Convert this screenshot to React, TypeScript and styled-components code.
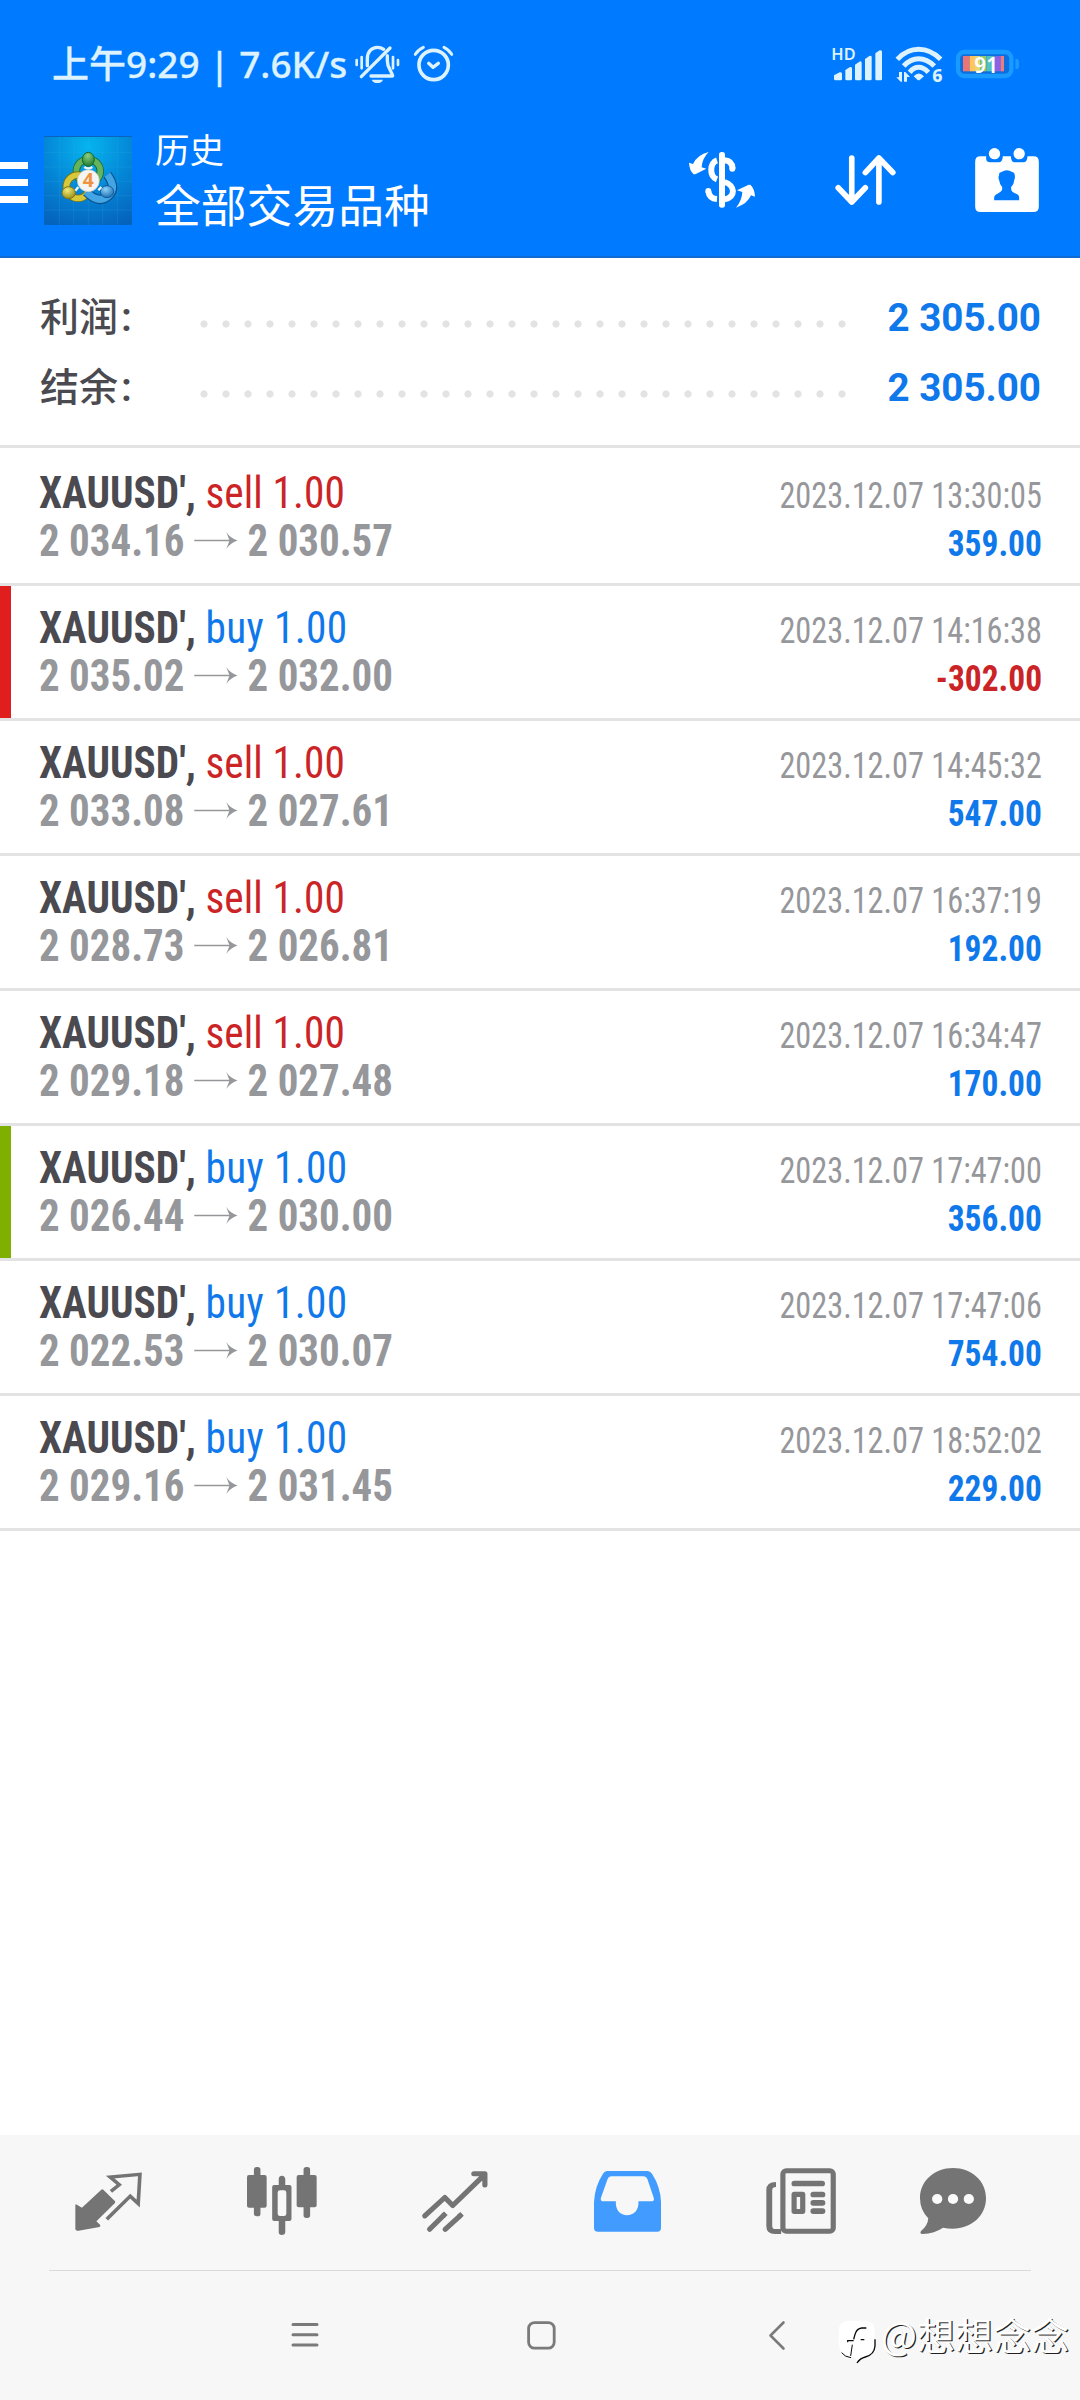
import React from "react";
import styled, { createGlobalStyle } from "styled-components";

const cjk = `"Noto Sans CJK SC", sans-serif`;

const GlobalStyle = createGlobalStyle`
  * { box-sizing: border-box; }
  body { margin: 0; background: #fff; }
`;

const Screen = styled.div`
  position: relative;
  display: flex;
  flex-direction: column;
  width: 1080px;
  height: 2400px;
  overflow: hidden;
  background: #fff;
  font-family: Roboto, ${cjk};
`;

const Icon = styled.svg`
  display: block;
  flex: none;
  overflow: visible;
`;

/* ---------- header ---------- */

const Header = styled.header`
  height: 258px;
  background: #007aff;
  border-bottom: 2px solid #0f6bd2;
  color: #fff;
`;

const StatusBar = styled.div`
  display: flex;
  align-items: flex-start;
  height: 130px;
  padding: 45px 61px 0 52px;
  color: #dcf2ff;
`;

const StatusText = styled.div`
  width: 303px;
  height: 37px;
  line-height: 37px;
  white-space: pre;
  font-family: "Noto Sans", ${cjk};
  font-size: 37px;
  font-weight: 500;
  -webkit-text-stroke: 0.3px currentColor;
`;

const StatusGroup = styled.div<{ $gap: number }>`
  display: flex;
  align-items: center;
  height: 37px;
  gap: ${(p) => p.$gap}px;
`;

const Spacer = styled.div`
  flex: 1;
`;

const TitleBar = styled.div`
  display: flex;
  align-items: flex-start;
  height: 126px;
  padding-right: 41px;
`;

const MenuButton = styled.div`
  display: flex;
  flex-direction: column;
  gap: 9.5px;
  width: 28px;
  margin: 32px 16px 0 0;
`;

const MenuBar = styled.span`
  height: 7.3px;
  background: #fff;
`;

const LogoBox = styled.div`
  padding-top: 6px;
`;

const Titles = styled.div`
  flex: 1;
  padding: 0 0 0 23px;
  font-family: ${cjk};
`;

const Subtitle = styled.div`
  height: 39px;
  line-height: 37px;
  font-size: 34.5px;
`;

const Title = styled.div`
  height: 60px;
  line-height: 60px;
  font-size: 45.8px;
  margin-top: 4px;
`;

const Actions = styled.div`
  display: flex;
  align-items: center;
  gap: 79.5px;
  margin-top: 18px;
  height: 64px;
`;

/* ---------- totals ---------- */

const Summary = styled.section`
  height: 190px;
  padding: 21px 39px 0 40px;
  border-bottom: 3px solid #e3e3e3;
`;

const SummaryRow = styled.div`
  display: flex;
  align-items: baseline;
  height: 70px;
  line-height: 70px;
`;

const SummaryLabel = styled.div`
  width: 160px;
  font-family: ${cjk};
  font-size: 39px;
  font-weight: 500;
  color: #4a4a50;
`;

const Colon = styled.span`
  margin-left: 3px;
  font-family: Roboto, sans-serif;
  font-weight: 600;
  font-size: 40px;
`;

const Leader = styled.div`
  align-self: center;
  width: 660px;
  height: 8px;
  margin-top: 20px;
  margin-left: -7.5px;
  background: radial-gradient(circle at center, #e3e3e3 3.2px, transparent 4px) 0 0 / 22px 8px;
`;

const SummaryValue = styled.div`
  flex: 1;
  text-align: right;
  font-size: 38.6px;
  font-weight: 700;
  color: #0f78ea;
`;

/* ---------- deals ---------- */

const Deals = styled.main`
  flex: 1;
  padding-top: 3px;
`;

const DealRow = styled.div<{ $mark?: string }>`
  display: flex;
  justify-content: space-between;
  height: 135px;
  padding: 19px 38px 0 28px;
  border-bottom: 3px solid #e3e3e3;
  background: linear-gradient(${(p) => p.$mark ?? "transparent"} 0 0) 0 0 / 11px 132px no-repeat;
`;

const DealSide = styled.div<{ $end?: boolean }>`
  display: flex;
  flex-direction: column;
  align-items: ${(p) => (p.$end ? "flex-end" : "flex-start")};
  padding: ${(p) => (p.$end ? "2px 0 0" : "0 0 0 11px")};
`;

const Line = styled.div<{ $small?: boolean; $squeeze: number }>`
  display: flex;
  align-items: center;
  height: 48px;
  line-height: 48px;
  white-space: pre;
  font-family: "Roboto Condensed", Roboto, sans-serif;
  font-stretch: 75%;
  font-size: ${(p) => (p.$small ? 36.5 : 43.5)}px;
  transform: scaleX(${(p) => p.$squeeze});
  transform-origin: ${(p) => (p.$small ? "right" : "left")} center;
`;

const Symbol = styled.span`
  font-weight: 700;
  color: #4a4a50;
`;

const Side = styled.span<{ $sell: boolean }>`
  letter-spacing: ${(p) => (p.$sell ? 0.1 : 0.4)}px;
  color: ${(p) => (p.$sell ? "#cb2427" : "#0f78ea")};
`;

const Price = styled.span`
  font-weight: 700;
  color: #96979b;
`;

const Time = styled.span`
  color: #96979b;
`;

const Profit = styled.span<{ $loss: boolean }>`
  font-weight: 700;
  color: ${(p) => (p.$loss ? "#cb2427" : "#0f78ea")};
`;

/* ---------- bottom ---------- */

const Footer = styled.footer`
  height: 265px;
  background: #f7f7f7;
`;

const Tabs = styled.nav`
  display: grid;
  grid-template-columns: repeat(5, 173px) 132px;
  align-items: center;
  justify-items: center;
  height: 135px;
  padding: 0 0 3px 22px;
`;

const Divider = styled.div`
  height: 1px;
  margin: 0 49px;
  background: #dadada;
`;

const SystemNav = styled.div`
  display: grid;
  grid-template-columns: 236px 236px 236px;
  justify-content: start;
  align-items: center;
  justify-items: center;
  height: 129px;
  padding: 0 0 1px 187px;
`;

const Watermark = styled.div`
  position: absolute;
  left: 838px;
  top: 2310px;
  display: flex;
  align-items: flex-start;
  gap: 5px;
  color: #fff;
  font-family: ${cjk};
  font-size: 38px;
  line-height: 47px;
  white-space: nowrap;
  text-shadow: 1.3px 1.3px 0.5px #222;
`;

const deals = [
  { side: "sell", from: "2 034.16", to: "2 030.57", time: "2023.12.07 13:30:05", profit: "359.00" },
  { side: "buy", from: "2 035.02", to: "2 032.00", time: "2023.12.07 14:16:38", profit: "-302.00", mark: "#e01e1e" },
  { side: "sell", from: "2 033.08", to: "2 027.61", time: "2023.12.07 14:45:32", profit: "547.00" },
  { side: "sell", from: "2 028.73", to: "2 026.81", time: "2023.12.07 16:37:19", profit: "192.00" },
  { side: "sell", from: "2 029.18", to: "2 027.48", time: "2023.12.07 16:34:47", profit: "170.00" },
  { side: "buy", from: "2 026.44", to: "2 030.00", time: "2023.12.07 17:47:00", profit: "356.00", mark: "#7fb000" },
  { side: "buy", from: "2 022.53", to: "2 030.07", time: "2023.12.07 17:47:06", profit: "754.00" },
  { side: "buy", from: "2 029.16", to: "2 031.45", time: "2023.12.07 18:52:02", profit: "229.00" },
];

const MutedBell = () => (
  <Icon width="45" height="38" viewBox="1064 76 135 114" fill="none" stroke="currentColor" strokeWidth="10" strokeLinecap="round" strokeLinejoin="round">
    <path d="M1101 138V117C1101 96 1114 83 1131 83Q1142 83 1150 89" />
    <path d="M1083 171L1169 85" />
    <path d="M1161 108V124C1161 144 1172 150 1177 169H1112" />
    <path d="M1114 180H1148Q1144 190 1131 190T1114 180Z" fill="currentColor" stroke="none" />
    <path d="M1069 121V136M1084 112V146M1178 112V146M1193 121V136" strokeWidth="8" />
  </Icon>
);

const AlarmClock = () => (
  <Icon width="39" height="37" viewBox="1242 76 117 111" fill="none" stroke="currentColor" strokeWidth="11" strokeLinecap="round" strokeLinejoin="round">
    <circle cx="1301" cy="136" r="44" />
    <path d="M1246 104Q1254 90 1270 83M1355 104Q1347 90 1332 83" strokeWidth="9" />
    <path d="M1286 131L1299 143L1315 131" strokeWidth="10" />
  </Icon>
);

const Signal = () => (
  <Icon width="50" height="34" viewBox="513 80 150 102" fill="currentColor">
    <text x="511" y="120" fontFamily="Noto Sans, sans-serif" fontSize="49" fontWeight="600" textLength="73">HD</text>
    <path d="M519 165L536 156Q543 154 543 160V176Q543 180 539 180H524Q519 180 519 176Z" />
    <path d="M553 149L567 140Q573 139 573 144V176Q573 180 569 180H557Q553 180 553 176Z" />
    <path d="M582 133L595 124Q602 121 602 128V176Q602 180 598 180H586Q582 180 582 176Z" />
    <path d="M612 116L625 107Q632 104 632 110V176Q632 180 628 180H616Q612 180 612 176Z" />
    <path d="M643 99L656 90Q663 88 663 94V176Q663 180 659 180H647Q643 180 643 176Z" />
  </Icon>
);

const Wifi = () => (
  <Icon width="46" height="36" viewBox="702 80 138 108" fill="none" stroke="currentColor" strokeWidth="15">
    <path d="M706 120Q734 90 770 90T836 120" />
    <path d="M725 140Q745 118 770 118T817 140" />
    <path d="M743 159Q755 144 770 144T799 159" />
    <path d="M755 171Q770 154 786 171L774 181Q770 184 766 181Z" fill="currentColor" stroke="none" />
    <path d="M703 174H711V158H720V187H716ZM726 187V158H730L744 173H735V187Z" fill="currentColor" stroke="none" />
    <text x="811" y="187" fontFamily="Noto Sans, sans-serif" fontSize="53" fontWeight="800" fill="currentColor" stroke="none">6</text>
  </Icon>
);

const stripes: [number, number, string][] = [
  [909, 20, "#ed7474"],
  [929, 16, "#ffc45e"],
  [945, 16, "#e4d873"],
  [961, 18, "#93c96f"],
  [979, 25, "#55c1bd"],
  [1004, 18, "#8b62e6"],
  [1022, 10, "#ed7c7c"],
];

const Battery = () => (
  <Icon width="63" height="28" viewBox="888 90 189 84">
    <rect x="894" y="96" width="160" height="72" rx="19" fill="#0c6fe0" stroke="#189aff" strokeWidth="13" />
    {stripes.map(([x, w, c]) => (
      <rect key={x} x={x} y="108" width={w} height="46" fill={c} />
    ))}
    <path d="M1066 117H1072Q1077 119 1077 126V140Q1077 146 1072 147H1066Z" fill="#189aff" />
    <text x="943" y="158" fontFamily="Noto Sans, sans-serif" fontSize="66" fontWeight="600" fill="#fff" textLength="71" lengthAdjust="spacingAndGlyphs">91</text>
  </Icon>
);

const AppLogo = () => (
  <Icon width="88" height="89" viewBox="42 48 264 267">
    <defs>
      <radialGradient id="sky" cx="0.5" cy="0.12" r="0.95">
        <stop offset="0" stopColor="#06b4ee" />
        <stop offset="0.5" stopColor="#0488d8" />
        <stop offset="1" stopColor="#0563bc" />
      </radialGradient>
      <radialGradient id="green" cx="0.45" cy="0.25" r="0.8">
        <stop offset="0" stopColor="#8ccf80" />
        <stop offset="1" stopColor="#16752a" />
      </radialGradient>
      <radialGradient id="gold" cx="0.4" cy="0.3" r="0.8">
        <stop offset="0" stopColor="#f2ea7c" />
        <stop offset="1" stopColor="#91860c" />
      </radialGradient>
      <radialGradient id="azure" cx="0.4" cy="0.3" r="0.8">
        <stop offset="0" stopColor="#8fd2f7" />
        <stop offset="1" stopColor="#0d64ac" />
      </radialGradient>
    </defs>
    <rect x="42" y="48" width="264" height="267" fill="url(#sky)" />
    <path d="M88 48V315M131 48V315M175 48V315M218 48V315M262 48V315M42 98H306M42 141H306M42 184H306M42 227H306M42 270H306" stroke="#3db4ee" strokeOpacity="0.25" strokeWidth="2" />
    <path d="M42 49.5H306" stroke="#0a64bd" strokeWidth="3" />
    <circle cx="175" cy="154" r="36" fill="none" stroke="#1a6b35" strokeWidth="22" />
    <circle cx="175" cy="154" r="36" fill="none" stroke="#63b45c" strokeWidth="17" />
    <circle cx="144" cy="200" r="35" fill="none" stroke="#7c7412" strokeWidth="22" />
    <circle cx="144" cy="200" r="35" fill="none" stroke="#d6c838" strokeWidth="17" />
    <path d="M232 164Q262 205 234 229Q205 252 169 216" fill="none" stroke="#0b4f8e" strokeWidth="28" />
    <path d="M232 164Q262 205 234 229Q205 252 169 216" fill="none" stroke="#43a5e4" strokeWidth="21" />
    <ellipse cx="175" cy="118" rx="18" ry="21" fill="url(#green)" stroke="#146b2b" strokeWidth="3" />
    <ellipse cx="116" cy="218" rx="20" ry="18" fill="url(#gold)" stroke="#7c7412" strokeWidth="3" />
    <ellipse cx="231" cy="215" rx="20" ry="18" fill="url(#azure)" stroke="#0d5c9e" strokeWidth="3" />
    <path d="M163 141Q175 150 187 141M136 212L145 201M214 201L205 211" stroke="#e9f6f5" strokeWidth="7" fill="none" />
    <circle cx="175" cy="182" r="33" fill="#f4f4f2" stroke="#bfc6c4" strokeWidth="2" />
    <text x="175" y="202" textAnchor="middle" fontFamily="Open Sans, sans-serif" fontSize="58" fontWeight="700" fill="#f0923e">4</text>
  </Icon>
);

const CurrencySwap = () => (
  <Icon width="66" height="56" viewBox="87 400 198 168" fill="#fff">
    <path d="M87 432L99 436Q112 408 146 400Q126 420 125 446L139 450L106 467H101Q88 455 87 432Z" />
    <path d="M285 534L273 530Q262 556 228 567Q246 545 247 520L231 515L266 498H271Q284 510 285 534Z" />
    <rect x="177" y="400" width="18" height="167" rx="8" />
    <path d="M171 425C149 432 147 473 171 482M194 425C210 426 217 435 218 450M194 490C226 500 228 536 194 542M171 541C154 540 147 532 145 518" fill="none" stroke="#fff" strokeWidth="18" />
    <circle cx="217" cy="450" r="9" />
    <circle cx="145" cy="517" r="9" />
  </Icon>
);

const SortArrows = () => (
  <Icon width="61" height="50" viewBox="524 407 183 151" fill="none" stroke="#fff" strokeWidth="17" strokeLinecap="round" strokeLinejoin="round">
    <path d="M574 416V549M533 506L574 549L615 506" />
    <path d="M656 549V416M615 460L656 416L698 460" />
  </Icon>
);

const CalendarUser = () => (
  <Icon width="64" height="64" viewBox="945 383 191 192">
    <path fillRule="evenodd" fill="#fff" d="M961 408H978V416Q979 426 990 426H1016Q1027 426 1028 408H1052Q1053 426 1063 426H1090Q1101 426 1102 408H1120Q1136 408 1136 424V559Q1136 575 1120 575H961Q945 575 945 559V424Q945 408 961 408ZM1002 540H1077V532Q1077 523 1068 520Q1053 515 1053 507V500Q1062 492 1062 480Q1066 472 1063 462Q1064 457 1056 455Q1040 445 1024 455Q1015 456 1017 464Q1013 472 1017 480Q1018 492 1026 500V507Q1025 514 1012 520Q1002 524 1002 532Z" />
    <circle cx="1003" cy="400" r="17" fill="#fff" />
    <circle cx="1077" cy="400" r="17" fill="#fff" />
  </Icon>
);

const Arrow = styled(Icon)`
  margin: 0 11px 4px 10px;
`;

const DealArrow = () => (
  <Arrow width="46" height="17" viewBox="0 0 46 17">
    <path d="M0 8.5H40" stroke="#96979b" strokeWidth="1.5" />
    <path d="M34 0Q38 6 46 8.5Q38 11 34 17L37.5 8.5Z" fill="#96979b" />
  </Arrow>
);

const grey = "#747474";

const QuotesIcon = () => (
  <Icon width="67" height="59" viewBox="218 159 194 176" preserveAspectRatio="none">
    <path d="M221 255L238 266L295 211Q297 209 300 212L334 246Q335 249 333 252L280 306L291 317Q292 322 289 323L228 334Q219 334 219 328V257Z" fill={grey} />
    <path d="M322 217L346 197L320 174L406 166L401 253L378 231L310 300" fill="none" stroke={grey} strokeWidth="10.5" />
  </Icon>
);

const ChartIcon = () => (
  <Icon width="70" height="68" viewBox="715 144 203 204" preserveAspectRatio="none" fill={grey}>
    <rect x="735" y="144" width="19" height="148" rx="8" />
    <rect x="715" y="168" width="57" height="98" rx="6" />
    <rect x="879" y="144" width="19" height="153" rx="8" />
    <rect x="859" y="168" width="58" height="97" rx="6" />
    <path fillRule="evenodd" d="M807 198V179Q808 170 816 170T826 179V198H838Q844 198 844 204V300Q844 306 838 306H826V340Q825 348 816 348T807 340V306H794Q788 306 788 300V204Q788 198 794 198ZM811 214Q804 214 804 221V284Q804 291 811 291H822Q829 291 829 284V221Q829 214 822 214Z" />
  </Icon>
);

const TradeIcon = () => (
  <Icon width="66" height="61" viewBox="1223 152 191 182" preserveAspectRatio="none" fill="none" stroke={grey} strokeWidth="15" strokeLinecap="round" strokeLinejoin="round">
    <path d="M1231 286L1289 231L1312 255L1405 162M1373 160H1405V194" />
    <path d="M1245 326L1286 284M1290 326L1333 286" />
    <path d="M1283 287L1292 278M1329 289L1339 280" strokeLinecap="butt" />
  </Icon>
);

const HistoryIcon = () => (
  <Icon width="67" height="61" viewBox="158 152 193 183" preserveAspectRatio="none">
    <path fillRule="evenodd" fill="#429bff" d="M196 152H312Q320 152 325 160Q350 200 351 245V323Q351 334 340 334H169Q158 334 158 323V245Q160 198 184 160Q188 152 196 152ZM207 168Q200 168 197 177L178 232Q175 243 186 243H221C219 270 235 285 253 285C272 285 288 270 286 243H323Q333 243 330 232L312 177Q309 168 300 168Z" />
  </Icon>
);

const NewsIcon = () => (
  <Icon width="70" height="66" viewBox="656 144 203 198" preserveAspectRatio="none">
    <rect x="705" y="152" width="146" height="182" rx="10" fill="none" stroke={grey} strokeWidth="15" />
    <path d="M685 186V201Q674 201 674 210V317Q674 327 683 327H700V342H682Q657 342 657 318V210Q657 186 685 186Z" fill={grey} />
    <g fill={grey}>
      <rect x="730" y="182" width="97" height="17" rx="8" />
      <rect x="785" y="215" width="43" height="17" rx="8" />
      <rect x="785" y="240" width="43" height="17" rx="8" />
      <rect x="785" y="265" width="43" height="17" rx="8" />
      <path fillRule="evenodd" d="M738 215H762Q770 215 770 223V274Q770 282 762 282H738Q730 282 730 274V223Q730 215 738 215ZM745 231V267H755V231Z" />
    </g>
  </Icon>
);

const ChatIcon = () => (
  <Icon width="66" height="66" viewBox="1103 144 192 198" preserveAspectRatio="none">
    <path fill={grey} d="M1199 144C1253 144 1295 183 1295 235S1253 326 1199 326Q1184 326 1170 323Q1146 340 1110 342Q1101 341 1106 333Q1126 317 1127 295Q1103 270 1103 235C1103 183 1145 144 1199 144Z" />
    <g fill="#fbfbfb">
      <circle cx="1153" cy="237" r="15" />
      <circle cx="1199" cy="237" r="15" />
      <circle cx="1245" cy="237" r="15" />
    </g>
  </Icon>
);

const RecentsIcon = () => (
  <Icon width="28" height="26" viewBox="0 0 28 26" stroke="#7a7a7a" strokeWidth="3" strokeLinecap="round">
    <path d="M2 2.5H26M2 12.8H26M2 23H26" />
  </Icon>
);

const HomeIcon = () => (
  <Icon width="29" height="29" viewBox="0 0 29 29" fill="none" stroke="#7a7a7a" strokeWidth="2.8">
    <rect x="1.6" y="1.6" width="25.6" height="25.6" rx="6" />
  </Icon>
);

const BackIcon = () => (
  <Icon width="16" height="29" viewBox="0 0 16 29" fill="none" stroke="#7a7a7a" strokeWidth="2.6" strokeLinecap="round" strokeLinejoin="round">
    <path d="M14.5 1.5L1.5 14.5L14.5 27.5" />
  </Icon>
);

const WatermarkBadge = () => (
  <Icon width="38" height="52" viewBox="24 30 114 156">
    <path d="M54 62H106Q134 64 134 94V134Q133 164 104 170Q90 173 80 184Q78 172 64 170Q28 164 26 130V94Q26 64 54 62Z" fill="#fff" />
    <g fill="none" stroke="#0a0a0a">
      <path d="M109 84H95Q80 86 75 103L71 118" strokeWidth="4" />
      <path d="M53 127V122H71M92 119H103" strokeWidth="3.5" />
      <path d="M67 134L62 168" strokeWidth="3" />
      <path d="M35 158Q44 171 63 173" strokeWidth="3" />
      <path d="M135 118V138Q133 164 106 171Q90 175 81 189" strokeWidth="4" />
    </g>
  </Icon>
);

const Totals = ({ label, value }: { label: string; value: string }) => (
  <SummaryRow>
    <SummaryLabel>
      {label}
      <Colon>:</Colon>
    </SummaryLabel>
    <Leader />
    <SummaryValue>{value}</SummaryValue>
  </SummaryRow>
);

export default function App() {
  return (
    <Screen>
      <GlobalStyle />
      <Header>
        <StatusBar>
          <StatusText>上午9:29 | 7.6K/s</StatusText>
          <StatusGroup $gap={14}>
            <MutedBell />
            <AlarmClock />
          </StatusGroup>
          <Spacer />
          <StatusGroup $gap={14}>
            <Signal />
            <Wifi />
            <Battery />
          </StatusGroup>
        </StatusBar>
        <TitleBar>
          <MenuButton>
            <MenuBar />
            <MenuBar />
            <MenuBar />
          </MenuButton>
          <LogoBox>
            <AppLogo />
          </LogoBox>
          <Titles>
            <Subtitle>历史</Subtitle>
            <Title>全部交易品种</Title>
          </Titles>
          <Actions>
            <CurrencySwap />
            <SortArrows />
            <CalendarUser />
          </Actions>
        </TitleBar>
      </Header>
      <Summary>
        <Totals label="利润" value="2 305.00" />
        <Totals label="结余" value="2 305.00" />
      </Summary>
      <Deals>
        {deals.map((d) => (
          <DealRow key={d.time} $mark={d.mark}>
            <DealSide>
              <Line $squeeze={0.949}>
                <Symbol>XAUUSD', </Symbol>
                <Side $sell={d.side === "sell"}>{d.side} 1.00</Side>
              </Line>
              <Line $squeeze={0.941}>
                <Price>{d.from}</Price>
                <DealArrow />
                <Price>{d.to}</Price>
              </Line>
            </DealSide>
            <DealSide $end>
              <Line $small $squeeze={0.884}>
                <Time>{d.time}</Time>
              </Line>
              <Line $small $squeeze={0.915}>
                <Profit $loss={d.profit.startsWith("-")}>{d.profit}</Profit>
              </Line>
            </DealSide>
          </DealRow>
        ))}
      </Deals>
      <Footer>
        <Tabs>
          <QuotesIcon />
          <ChartIcon />
          <TradeIcon />
          <HistoryIcon />
          <NewsIcon />
          <ChatIcon />
        </Tabs>
        <Divider />
        <SystemNav>
          <RecentsIcon />
          <HomeIcon />
          <BackIcon />
        </SystemNav>
      </Footer>
      <Watermark>
        <WatermarkBadge />
        <span>@想想念念</span>
      </Watermark>
    </Screen>
  );
}
